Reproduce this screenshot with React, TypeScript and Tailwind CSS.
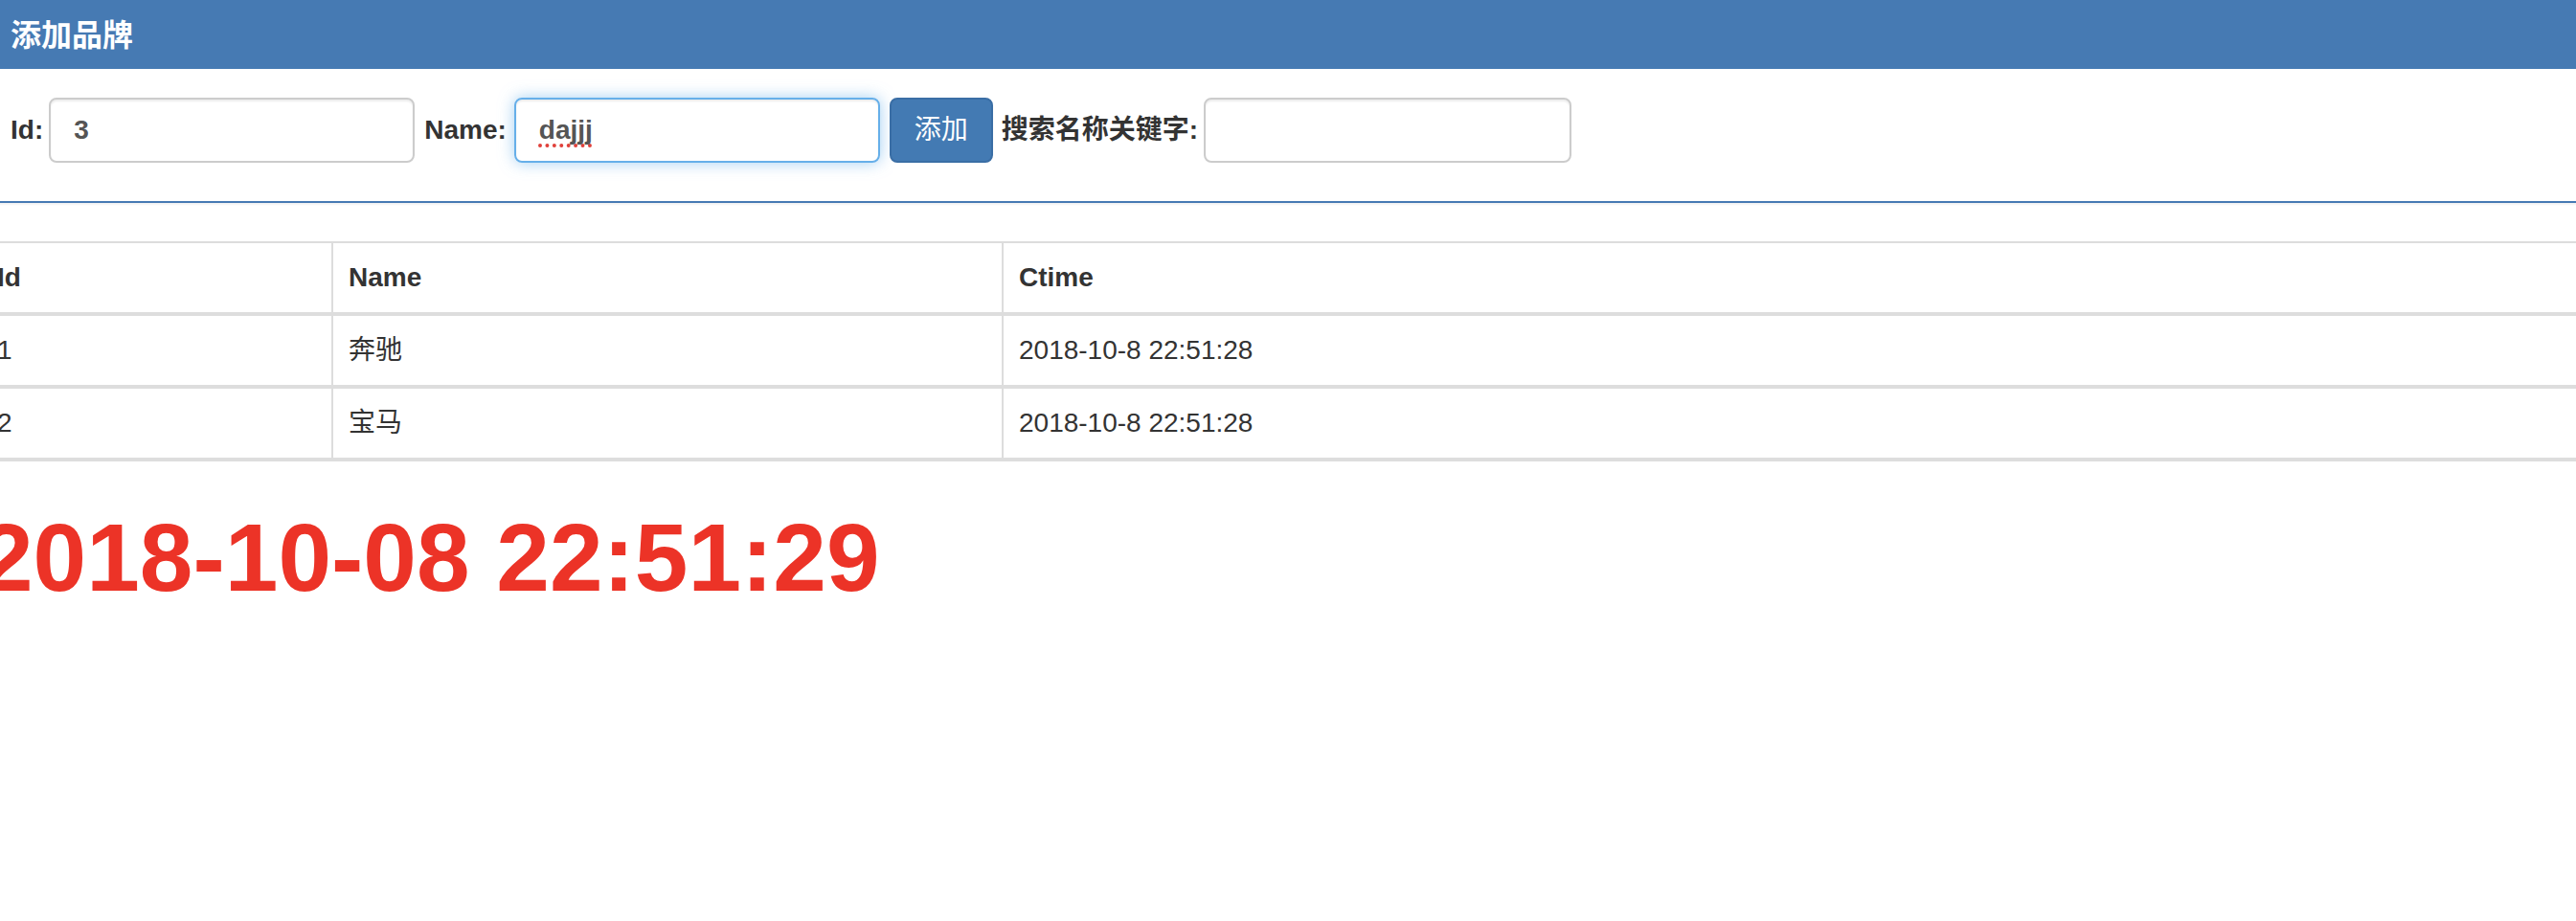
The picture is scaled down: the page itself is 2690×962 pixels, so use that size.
import { useState } from "react";

type Brand = { id: number; name: string; ctime: string };

const font = "font-['Liberation_Sans','Noto_Sans_CJK_SC',sans-serif]";

export default function App() {
  const [list] = useState<Brand[]>([
    { id: 1, name: "奔驰", ctime: "2018-10-8 22:51:28" },
    { id: 2, name: "宝马", ctime: "2018-10-8 22:51:28" },
  ]);
  const [id, setId] = useState<string>("3");
  const [keywords, setKeywords] = useState<string>("");

  return (
    <div className={`w-full min-h-screen overflow-hidden bg-white text-[#333] ${font}`}>
      {/* page is scrolled a bit to the right in the shot */}
      <div className="-ml-[21px] w-[calc(100%+42px)]">
        {/* panel */}
        <div className="border-2 border-[#467ab3] rounded-[8px] mb-[40px] shadow-[0_2px_2px_rgba(0,0,0,0.05)]">
          <div className="h-[70px] flex items-center px-[30px] bg-[#467ab3]">
            <h3 className="text-[32px] font-bold text-white leading-none">添加品牌</h3>
          </div>
          <div className="px-[30px] pt-[30px] pb-[40px] flex items-center text-[28px]">
            <label className="font-bold">Id:</label>
            <input
              className="ml-[6px] w-[382px] h-[68px] px-[24px] border-2 border-[#ccc] rounded-[8px] shadow-[inset_0_2px_2px_rgba(0,0,0,0.075)] text-[28px] font-bold text-[#555] outline-none"
              value={id}
              onChange={(e) => setId(e.target.value)}
            />
            <label className="ml-[10px] font-bold">Name:</label>
            {/* focused field, with the spell check dots */}
            <div className="ml-[8px] w-[382px] h-[68px] px-[24px] flex items-center border-2 border-[#66afe9] rounded-[8px] shadow-[inset_0_2px_2px_rgba(0,0,0,0.075),0_0_16px_rgba(102,175,233,0.6)] font-bold text-[#555]">
              <span className="underline decoration-dotted decoration-[#e0413b] decoration-[4px] underline-offset-[5px] [text-decoration-skip-ink:none]">dajjj</span>
            </div>
            <button className="ml-[10px] w-[108px] h-[68px] bg-[#437ab3] border-2 border-[#3a6ea5] rounded-[8px] text-white text-[28px]">
              添加
            </button>
            <label className="ml-[9px] font-bold">搜索名称关键字:</label>
            <input
              className="ml-[6px] w-[384px] h-[68px] px-[24px] border-2 border-[#ccc] rounded-[8px] shadow-[inset_0_2px_2px_rgba(0,0,0,0.075)] text-[28px] text-[#555] outline-none"
              value={keywords}
              onChange={(e) => setKeywords(e.target.value)}
            />
          </div>
        </div>

        {/* table */}
        <table className="w-full border-collapse border-t-2 border-[#ddd] text-[28px] leading-[40px]">
          <thead>
            <tr>
              <th className="w-[367px] text-left font-bold px-[16px] py-[16px] border-x-2 border-b-4 border-[#ddd]">Id</th>
              <th className="w-[700px] text-left font-bold px-[16px] py-[16px] border-x-2 border-b-4 border-[#ddd]">Name</th>
              <th className="text-left font-bold px-[16px] py-[16px] border-x-2 border-b-4 border-[#ddd]">Ctime</th>
            </tr>
          </thead>
          <tbody>
            {list.map((item) => (
              <tr key={item.id}>
                <td className="px-[16px] py-[16px] border-x-2 border-b-4 border-[#ddd]">{item.id}</td>
                <td className="px-[16px] py-[16px] border-x-2 border-b-4 border-[#ddd]">{item.name}</td>
                <td className="px-[16px] py-[16px] border-x-2 border-b-4 border-[#ddd]">{item.ctime}</td>
              </tr>
            ))}
          </tbody>
        </table>

        <h1 className="mt-[50px] text-[100px] font-bold leading-none text-[#ec3327]">2018-10-08 22:51:29</h1>
      </div>
    </div>
  );
}
